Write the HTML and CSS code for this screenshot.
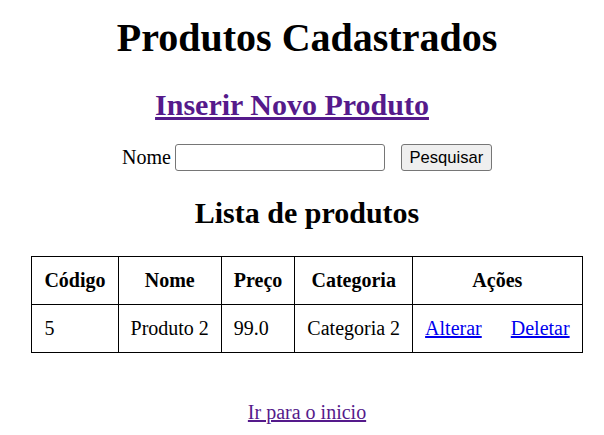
FILE: index.html
```html
<!DOCTYPE html>
<html lang="pt">
<head>
<meta charset="utf-8">
<title>Produtos Cadastrados</title>
<link rel="stylesheet" href="styles.css">
</head>
<body>
<div class="page">
  <h1 class="title">Produtos Cadastrados</h1>
  <h2 class="insert"><a href="#novo" class="visited">Inserir Novo Produto</a></h2>
  <form class="search">
    <label class="lbl" for="nome">Nome</label>
    <input class="field" id="nome" type="text">
    <button class="btn" type="button">Pesquisar</button>
  </form>
  <h2 class="subtitle">Lista de produtos</h2>
  <table class="grid">
    <thead>
      <tr>
        <th>Código</th>
        <th>Nome</th>
        <th>Preço</th>
        <th>Categoria</th>
        <th>Ações</th>
      </tr>
    </thead>
    <tbody>
      <tr>
        <td class="left">5</td>
        <td>Produto 2</td>
        <td class="left">99.0</td>
        <td>Categoria 2</td>
        <td class="actions"><a href="#alterar" class="link">Alterar</a><a href="#deletar" class="link">Deletar</a></td>
      </tr>
    </tbody>
  </table>
  <p class="back"><a href="#inicio" class="visited">Ir para o inicio</a></p>
</div>
</body>
</html>
```
FILE: styles.css
```css
html, body {
  background: #fff;
}
body {
  margin: 0;
  font-family: "Liberation Serif", "Times New Roman", serif;
  font-size: 20px;
  color: #000;
}
.page {
  padding: 0 10px 0 20px;
  display: flex;
  flex-direction: column;
  align-items: center;
}
.title {
  font-size: 40px;
  font-weight: bold;
  margin: 14px 0 0;
  line-height: normal;
}
.insert {
  font-size: 30px;
  font-weight: bold;
  margin: 27px 0 0;
  padding-right: 30px;
  line-height: normal;
}
.visited {
  color: #551a8b;
}
.link {
  color: #0000ee;
}
.search {
  margin: 22px 0 0;
  display: flex;
  align-items: center;
}
.lbl {
  margin-right: 4px;
}
.field {
  width: 210px;
  height: 27px;
  box-sizing: border-box;
  border: 1px solid #767676;
  border-radius: 3px;
  margin: 0 16px 0 0;
  padding: 1px 3px;
  font-size: 16px;
}
.btn {
  font-family: "Liberation Sans", Arial, sans-serif;
  font-size: 16.6px;
  width: 91px;
  height: 27px;
  padding: 0;
  border: 1px solid #767676;
  border-radius: 3px;
  background: #efefef;
  color: #000;
}
.subtitle {
  font-size: 30px;
  font-weight: bold;
  margin: 25px 0 0;
  line-height: normal;
}
.grid {
  margin-top: 26px;
  border-collapse: collapse;
  border: 1px solid #333;
}
.grid th, .grid td {
  border: 1px solid #000;
  padding: 12px 12px;
  text-align: center;
}
.grid td.left {
  text-align: left;
}
.actions .link + .link {
  margin-left: 29px;
}
.back {
  margin: 48px 0 0;
}
```
